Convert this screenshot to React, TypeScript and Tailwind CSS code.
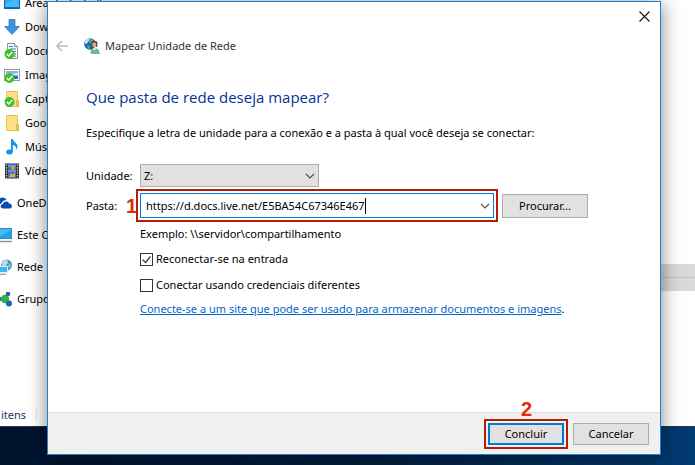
import type { ReactNode } from 'react';

function DesktopIcon() {
  return (
    <svg viewBox="0 0 16 16" className="h-4 w-4 shrink-0">
      <rect x="0.5" y="2.5" width="15" height="11" fill="#2fa8f5" stroke="#0a66b5" />
      <path d="M1 9l14-6v10H1z" fill="#46b8ff" />
      <path d="M1 12.5h14" stroke="#0b6fc4" />
    </svg>
  );
}

function DownloadIcon() {
  return (
    <svg viewBox="0 0 16 16" className="h-4 w-4 shrink-0">
      <path d="M5 0.5h6v7h4.5L8 15.5 0.5 7.5H5z" fill="#3f94dc" stroke="#2f7cc4" strokeWidth="0.8" />
    </svg>
  );
}

function SyncBadge() {
  return (
    <g>
      <circle cx="5.5" cy="11" r="5" fill="#3fc02c" />
      <path d="M2.8 11l2 2 3.5-4" fill="none" stroke="#fff" strokeWidth="1.5" />
    </g>
  );
}

function DocumentIcon() {
  return (
    <svg viewBox="0 0 16 16" className="h-4 w-4 shrink-0">
      <path d="M3.5 0.5h7l3 3v12h-10z" fill="#fff" stroke="#8b9299" />
      <path d="M10.5 0.5v3h3" fill="#dde3e8" stroke="#8b9299" />
      <path d="M5 3.5h4M6 6h6M8 8.5h4M9 11h3M10 13.2h2" stroke="#3e80a8" />
      <SyncBadge />
    </svg>
  );
}

function PictureIcon() {
  return (
    <svg viewBox="0 0 16 16" className="h-4 w-4 shrink-0">
      <rect x="0.5" y="2.5" width="15" height="11" fill="#fff" stroke="#9a9a9a" />
      <rect x="2" y="4" width="12" height="8" fill="#7db7f0" />
      <path d="M2 7c4-2 7 1 12-1v2H2z" fill="#dceeff" />
      <path d="M2 9h12v3H2z" fill="#3a6db5" />
      <SyncBadge />
    </svg>
  );
}

function FolderIcon({ synced }: { synced?: boolean }) {
  return (
    <svg viewBox="0 0 16 16" className="h-4 w-4 shrink-0">
      <path d="M2.5 0.5h11v9h1v6h-12z" fill="#ffe08a" stroke="#e6c15c" />
      <path d="M12.5 9.5h2v6h-2z" fill="#f7cd62" stroke="#dfb547" />
      {synced && <SyncBadge />}
    </svg>
  );
}

function MusicIcon() {
  return (
    <svg viewBox="0 0 16 16" className="h-4 w-4 shrink-0">
      <ellipse cx="5.5" cy="13" rx="3.3" ry="2.5" fill="#0c97ee" />
      <path d="M7 0h1.8c.3 3 5 4 4.7 7.5-.1 1.3-.7 2.2-1.5 3 .5-3-1.2-4-3.2-4.5V13H7z" fill="#0c97ee" />
    </svg>
  );
}

function VideoIcon() {
  return (
    <svg viewBox="0 0 16 16" className="h-4 w-4 shrink-0">
      <rect x="1" y="0.5" width="14" height="15" fill="#333" />
      <rect x="4" y="1" width="8" height="14" fill="#3b6fc9" />
      <path d="M4 8h8M4 3h8" stroke="#8fc0f5" />
      <circle cx="9" cy="5" r="2" fill="#d8a21c" />
      <path d="M5 14l2-4 2 2 2-3v5z" fill="#e3b72b" />
      <path d="M2.5 1.5v14M13.5 1.5v14" stroke="#ddd" strokeWidth="1.2" strokeDasharray="1.3 1.3" />
    </svg>
  );
}

function OneDriveIcon() {
  return (
    <svg viewBox="0 0 16 16" className="h-4 w-4 shrink-0">
      <path d="M0 10a3 3 0 0 1 2-3 4.5 4.5 0 0 1 8.500-2C8 5 6 6.500 5.500 8.500 3.500 8.500 3 11 4 12H2a2 2 0 0 1-2-2z" fill="#0a49ae" />
      <path d="M6.500 13.500c-2.500-.5-2.500-4 .3-4.200.5-3.300 5.200-4 6.400-.8 3.300.3 3.500 4.600.8 5z" fill="#0a49ae" />
    </svg>
  );
}

function ComputerIcon() {
  return (
    <svg viewBox="0 0 16 16" className="h-4 w-4 shrink-0">
      <rect x="0.5" y="1.5" width="15" height="10" fill="#4bb6f8" stroke="#3586bd" />
      <path d="M1 11L15 3v8z" fill="#27a0ef" />
      <path d="M3 14.5h13" stroke="#8296a8" strokeWidth="1.5" />
    </svg>
  );
}

function NetworkIcon() {
  return (
    <svg viewBox="0 0 16 16" className="h-4 w-4 shrink-0">
      <circle cx="10.5" cy="6" r="5.5" fill="#4d93bf" />
      <path d="M7 2c2-2 5-1 5 1s-2 2-2 4-3 1-4-1 0-3 1-4z" fill="#b9dcec" />
      <path d="M13 4c2 1 2 4 1 5l-2-1z" fill="#8ec3da" />
      <rect x="0.5" y="7.5" width="11" height="6" fill="#43b4f7" stroke="#d8eefb" />
      <path d="M2 15.3h8" stroke="#6d8ba2" />
    </svg>
  );
}

function HomegroupIcon() {
  return (
    <svg viewBox="0 0 16 16" className="h-4 w-4 shrink-0">
      <path d="M3 8h6l3-5M9 8l4 5" stroke="#7aaad0" strokeWidth="1.5" fill="none" />
      <circle cx="3" cy="8" r="2.5" fill="#1c64ae" />
      <circle cx="9" cy="8" r="4.2" fill="#31b044" />
      <circle cx="12" cy="3" r="2.3" fill="#1c64ae" />
      <circle cx="13" cy="12.5" r="3" fill="#1c64ae" />
    </svg>
  );
}

function MapDriveIcon() {
  return (
    <svg viewBox="0 0 16 16" className="h-4 w-4 shrink-0">
      <circle cx="6" cy="6" r="5.8" fill="#1d5cc0" />
      <path d="M1 3c1.500-2.500 4-3 5-2.500L5 3 3 5.500 1 6z" fill="#b7e0ff" />
      <path d="M6 1c3 0 4 2 3 3.500L7 6 5 4zM3 7l3 1v3L4 10.500z" fill="#3cc238" />
      <path d="M7.500 5C7 2.500 13 1.500 13.500 5l-.5 4H8.500z" fill="#6a4027" />
      <ellipse cx="10.3" cy="6.8" rx="2" ry="2.6" fill="#e3a982" />
      <path d="M6.500 15.500c0-4 1.500-5 4-5.500 3 0 5 2 5.500 6-3 .3-7 .3-9.500-.5z" fill="#72b595" />
      <path d="M9 10l1.500 3L12 9.800z" fill="#e8f4ee" />
    </svg>
  );
}

function Chevron({ className }: { className: string }) {
  return (
    <svg viewBox="0 0 10 6" className={className}>
      <path d="M1 1l4 4 4-4" fill="none" stroke="#505050" strokeWidth="1.1" />
    </svg>
  );
}

function Checkbox({ label, checked }: { label: string; checked?: boolean }) {
  return (
    <label className="flex h-[26px] items-center gap-[3px]">
      <span className="relative h-[13px] w-[13px]">
        <input
          type="checkbox"
          defaultChecked={checked}
          className="peer block h-[13px] w-[13px] appearance-none border border-[#333] bg-white"
        />
        <svg
          viewBox="0 0 13 13"
          className="pointer-events-none absolute inset-0 hidden h-[13px] w-[13px] peer-checked:block"
        >
          <path d="M2.5 6.5l3 3 5-6" fill="none" stroke="#404040" strokeWidth="1.3" />
        </svg>
      </span>
      {label}
    </label>
  );
}

const quickAccess: { label: string; icon: ReactNode }[] = [
  { label: 'Área de Trabalho', icon: <DesktopIcon /> },
  { label: 'Downloads', icon: <DownloadIcon /> },
  { label: 'Documentos', icon: <DocumentIcon /> },
  { label: 'Imagens', icon: <PictureIcon /> },
  { label: 'Capturas', icon: <FolderIcon synced /> },
  { label: 'Google Drive', icon: <FolderIcon /> },
  { label: 'Músicas', icon: <MusicIcon /> },
  { label: 'Vídeos', icon: <VideoIcon /> },
];

const roots: { label: string; icon: ReactNode }[] = [
  { label: 'OneDrive', icon: <OneDriveIcon /> },
  { label: 'Este Computador', icon: <ComputerIcon /> },
  { label: 'Rede', icon: <NetworkIcon /> },
  { label: 'Grupo Doméstico', icon: <HomegroupIcon /> },
];

function Explorer() {
  return (
    <div className="flex min-h-0 flex-1 flex-col overflow-hidden bg-white">
      <div className="flex min-h-0 flex-1 overflow-hidden">
        <nav className="-mt-[9px] w-52 shrink-0">
          <ul>
            {quickAccess.map((item) => (
              <li key={item.label} className="flex h-6 items-center gap-[5px] whitespace-nowrap pl-1">
                {item.icon}
                {item.label}
              </li>
            ))}
          </ul>
          <ul className="mt-1 -ml-1">
            {roots.map((item) => (
              <li key={item.label} className="flex h-8 items-center gap-[5px] whitespace-nowrap">
                {item.icon}
                {item.label}
              </li>
            ))}
          </ul>
        </nav>
        {/* Selected rows of the file list */}
        <div className="flex-1 pt-[264px]">
          <div className="h-[13px] bg-[#d9d9d9]" />
          <div className="h-[14px] border-t border-[#c3c3c3] bg-[#d9d9d9]" />
        </div>
      </div>
      <div className="flex h-[22px] items-center gap-2.5 pl-px text-[#1e395b]">
        <span>itens</span>
        <span className="h-3 w-px bg-gray-200" />
      </div>
    </div>
  );
}

function MapDriveDialog() {
  return (
    <div
      role="dialog"
      aria-label="Mapear Unidade de Rede"
      className="absolute top-px right-[34px] bottom-2.5 left-[47px] flex flex-col border border-[#1883d7] bg-white shadow-[0_3px_18px_rgba(0,0,0,0.5)]"
    >
      <div className="flex h-7 items-center justify-end pr-2.5">
        <button type="button" aria-label="Fechar">
          <svg viewBox="0 0 11 11" className="h-[11px] w-[11px]">
            <path d="M0.5 0.5l10 10M10.5 0.5l-10 10" stroke="#111" strokeWidth="1.1" />
          </svg>
        </button>
      </div>

      <div className="flex h-8 items-center pl-2">
        <button type="button" aria-label="Voltar">
          <svg viewBox="0 0 12 12" className="h-3 w-3">
            <path d="M12 6H1M6 1L1 6l5 5" fill="none" stroke="#bdbdbd" strokeWidth="1.7" />
          </svg>
        </button>
        <div className="ml-4 flex items-center gap-[5px] text-[#333]">
          <MapDriveIcon />
          <span>Mapear Unidade de Rede</span>
        </div>
      </div>

      <form className="flex flex-1 flex-col" onSubmit={(e) => e.preventDefault()}>
        <div className="flex-1 pt-[23px] pl-[38px]">
          <h1 className="font-['Open_Sans',sans-serif] text-[15px] leading-6 text-[#003399]">
            Que pasta de rede deseja mapear?
          </h1>
          <p className="mt-3.5 leading-5">
            Especifique a letra de unidade para a conexão e a pasta à qual você deseja se conectar:
          </p>

          <div className="mt-[21px] flex h-[23px] items-center">
            <label htmlFor="drive" className="w-[54px]">
              Unidade:
            </label>
            <div className="relative">
              <select
                id="drive"
                className="block h-[23px] w-[179px] appearance-none border border-[#adadad] bg-[#e1e1e1] pl-[3px]"
              >
                <option>Z:</option>
              </select>
              <Chevron className="pointer-events-none absolute top-[9px] right-1 h-1.5 w-2.5" />
            </div>
          </div>

          <div className="mt-0.5 flex items-center">
            <label htmlFor="folder" className="w-10">
              Pasta:
            </label>
            <span className="w-2.5 text-center font-[Liberation_Sans] text-xl leading-6 font-bold text-[#e52a0c]">1</span>
            <div className="border-2 border-[#b81c04] p-0.5">
              <div className="flex h-[25px] w-[354px] items-center border border-[#0078d7] pr-[3px] pl-[5px]">
                <input
                  id="folder"
                  type="text"
                  role="combobox"
                  aria-expanded="false"
                  defaultValue="https://d.docs.live.net/E5BA54C67346E467"
                  className="field-sizing-content outline-none"
                />
                <span className="h-4 w-px bg-black" />
                <Chevron className="ml-auto h-1.5 w-2.5" />
              </div>
            </div>
            <button type="button" className="ml-1 h-6 w-[86px] border border-[#adadad] bg-[#e1e1e1]">
              Procurar...
            </button>
          </div>

          <div className="pl-[54px]">
            <p className="mt-0.5 mb-0.5 leading-5">Exemplo: \\servidor\compartilhamento</p>
            <Checkbox label="Reconectar-se na entrada" checked />
            <Checkbox label="Conectar usando credenciais diferentes" />
            <p className="mt-px leading-5">
              <a href="#site" className="text-[#0066cc] underline">
                Conecte-se a um site que pode ser usado para armazenar documentos e imagens
              </a>
              .
            </p>
          </div>
        </div>

        <div className="relative flex h-[42px] items-center justify-end gap-[5px] border-t border-[#dfdfdf] bg-[#f0f0f0] pr-[11px]">
          <span className="absolute -top-4 right-32 font-[Liberation_Sans] text-xl leading-6 font-bold text-[#e52a0c]">
            2
          </span>
          <div className="border-2 border-[#b81c04] p-0.5">
            <button type="submit" className="block h-[22px] w-[76px] border-2 border-[#0078d7] bg-[#e1e1e1]">
              Concluir
            </button>
          </div>
          <button type="button" className="h-[22px] w-[76px] border border-[#adadad] bg-[#e1e1e1]">
            Cancelar
          </button>
        </div>
      </form>
    </div>
  );
}

export default function App() {
  return (
    <div className="relative flex h-screen flex-col overflow-hidden font-['Noto_Sans','Open_Sans',sans-serif] text-[11px] leading-4 text-black">
      <Explorer />
      <div className="h-[39px] border-t border-[#26384e] bg-linear-to-r from-[#00132e] via-[#001d3d] to-[#003b72]" />
      <MapDriveDialog />
    </div>
  );
}
